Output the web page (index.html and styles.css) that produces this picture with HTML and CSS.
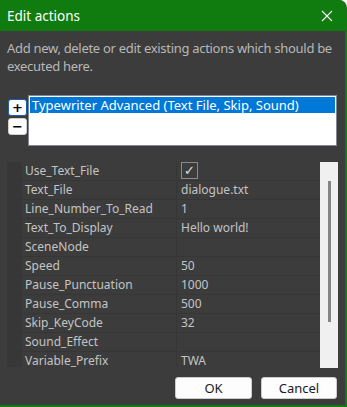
FILE: index.html
```html
<!DOCTYPE html>
<html lang="en">
<head>
    <meta charset="UTF-8">
    <title>Edit actions</title>
    <link rel="stylesheet" href="styles.css">
</head>
<body>
    <div class="window">
        <div class="title-bar">
            <span class="title-text">Edit actions</span>
            <svg class="close-icon" width="12" height="12" viewBox="0 0 12 12">
                <path d="M1 1 L11 11 M11 1 L1 11" stroke="#fff" stroke-width="1.1" fill="none"/>
            </svg>
        </div>

        <div class="content">
            <p class="description">Add new, delete or edit existing actions which should be executed here.</p>

            <div class="action-row">
                <div class="small-buttons">
                    <button class="small-button focused">+</button>
                    <button class="small-button">&minus;</button>
                </div>
                <div class="action-list">
                    <div class="action-item selected">Typewriter Advanced (Text File, Skip, Sound)</div>
                </div>
            </div>

            <div class="property-area">
                <div class="property-grid">
                    <div class="prop-row">
                        <div class="prop-gutter"></div>
                        <div class="prop-name">Use_Text_File</div>
                        <div class="prop-value"><span class="checkbox">&#10003;</span></div>
                    </div>
                    <div class="prop-row">
                        <div class="prop-gutter"></div>
                        <div class="prop-name">Text_File</div>
                        <div class="prop-value">dialogue.txt</div>
                    </div>
                    <div class="prop-row">
                        <div class="prop-gutter"></div>
                        <div class="prop-name">Line_Number_To_Read</div>
                        <div class="prop-value">1</div>
                    </div>
                    <div class="prop-row">
                        <div class="prop-gutter"></div>
                        <div class="prop-name">Text_To_Display</div>
                        <div class="prop-value">Hello world!</div>
                    </div>
                    <div class="prop-row">
                        <div class="prop-gutter"></div>
                        <div class="prop-name">SceneNode</div>
                        <div class="prop-value"></div>
                    </div>
                    <div class="prop-row">
                        <div class="prop-gutter"></div>
                        <div class="prop-name">Speed</div>
                        <div class="prop-value">50</div>
                    </div>
                    <div class="prop-row">
                        <div class="prop-gutter"></div>
                        <div class="prop-name">Pause_Punctuation</div>
                        <div class="prop-value">1000</div>
                    </div>
                    <div class="prop-row">
                        <div class="prop-gutter"></div>
                        <div class="prop-name">Pause_Comma</div>
                        <div class="prop-value">500</div>
                    </div>
                    <div class="prop-row">
                        <div class="prop-gutter"></div>
                        <div class="prop-name">Skip_KeyCode</div>
                        <div class="prop-value">32</div>
                    </div>
                    <div class="prop-row">
                        <div class="prop-gutter"></div>
                        <div class="prop-name">Sound_Effect</div>
                        <div class="prop-value"></div>
                    </div>
                    <div class="prop-row">
                        <div class="prop-gutter"></div>
                        <div class="prop-name">Variable_Prefix</div>
                        <div class="prop-value">TWA</div>
                    </div>
                </div>
                <div class="scrollbar">
                    <div class="scroll-thumb"></div>
                </div>
            </div>

            <div class="dialog-buttons">
                <button class="dialog-button">OK</button>
                <button class="dialog-button cancel">Cancel</button>
            </div>
        </div>
    </div>
</body>
</html>
```

FILE: styles.css
```css
body {
    margin: 0;
    background-color: #ffffff;
    font-family: "Noto Sans", "Open Sans", sans-serif;
    overflow: hidden;
}

.window {
    width: 345px;
    height: 405px;
    background-color: #3c3c3c;
    border-right: 2px solid #107c10;
    border-bottom: 2px solid #107c10;
    border-top-right-radius: 8px;
    overflow: hidden;
}

.title-bar {
    height: 31px;
    background-color: #107c10;
    display: flex;
    align-items: center;
    justify-content: space-between;
    padding: 0 12px 0 7px;
}

.title-text {
    color: #ffffff;
    font-size: 13.5px;
}

.close-icon {
    display: block;
}

.content {
    padding: 8px 7px 0 7px;
}

.description {
    margin: 0;
    color: #b8b8b8;
    font-size: 13px;
    letter-spacing: -0.3px;
    line-height: 18px;
}

.action-row {
    display: flex;
    margin-top: 20px;
}

.small-buttons {
    display: flex;
    flex-direction: column;
    gap: 2px;
    padding-top: 4px;
    margin-left: 1px;
}

.small-button {
    width: 19px;
    height: 17px;
    padding: 0;
    border: 1px solid #d0d0d0;
    border-radius: 3px;
    background-color: #fdfdfd;
    color: #000;
    font-family: "DejaVu Sans", sans-serif;
    font-size: 13px;
    font-weight: bold;
    line-height: 14px;
}

.small-button.focused {
    border: 1px solid #1a5fb4;
}

.action-list {
    flex: 1;
    height: 47px;
    margin-left: 1px;
    margin-right: 1px;
    background-color: #ffffff;
    border: 1px solid #828790;
    padding: 1px;
}

.action-item {
    height: 16px;
    line-height: 16px;
    padding-left: 2px;
    font-size: 13px;
    color: #000;
}

.action-item.selected {
    background-color: #0078d7;
    color: #ffffff;
}

.property-area {
    display: flex;
    margin-top: 16px;
    height: 206px;
}

.property-grid {
    width: 313px;
    height: 205px;
    overflow: hidden;
}

.prop-row {
    display: flex;
    height: 19px;
    border-bottom: 1px solid #363636;
    box-sizing: border-box;
}

.prop-gutter {
    width: 15px;
    background-color: #373737;
}

.prop-name {
    width: 151px;
    padding-left: 3px;
    border-right: 1px solid #363636;
    color: #c4c4c4;
    font-size: 12px;
    line-height: 18px;
    white-space: nowrap;
}

.prop-value {
    flex: 1;
    padding-left: 4px;
    color: #c4c4c4;
    font-size: 12px;
    line-height: 18px;
    white-space: nowrap;
}

.checkbox {
    display: inline-flex;
    width: 15px;
    height: 15px;
    border: 1px solid #8a8a8a;
    align-items: center;
    justify-content: center;
    font-family: "DejaVu Sans", sans-serif;
    font-size: 13px;
    line-height: 15px;
    color: #e0e0e0;
    vertical-align: top;
}

.scrollbar {
    width: 18px;
    background-color: #f0f0f0;
}

.scroll-thumb {
    width: 3px;
    height: 141px;
    margin: 19px 0 0 8px;
    background-color: #858585;
}

.dialog-buttons {
    display: flex;
    justify-content: flex-end;
    gap: 9px;
    margin-top: 9px;
    padding-right: 1px;
}

.dialog-button {
    width: 77px;
    height: 22px;
    padding: 0;
    border: 1px solid #cccccc;
    border-radius: 3px;
    background-color: #fdfdfd;
    color: #1a1a1a;
    font-family: "Noto Sans", sans-serif;
    font-size: 13px;
}

.dialog-button.cancel {
    width: 76px;
}
```
